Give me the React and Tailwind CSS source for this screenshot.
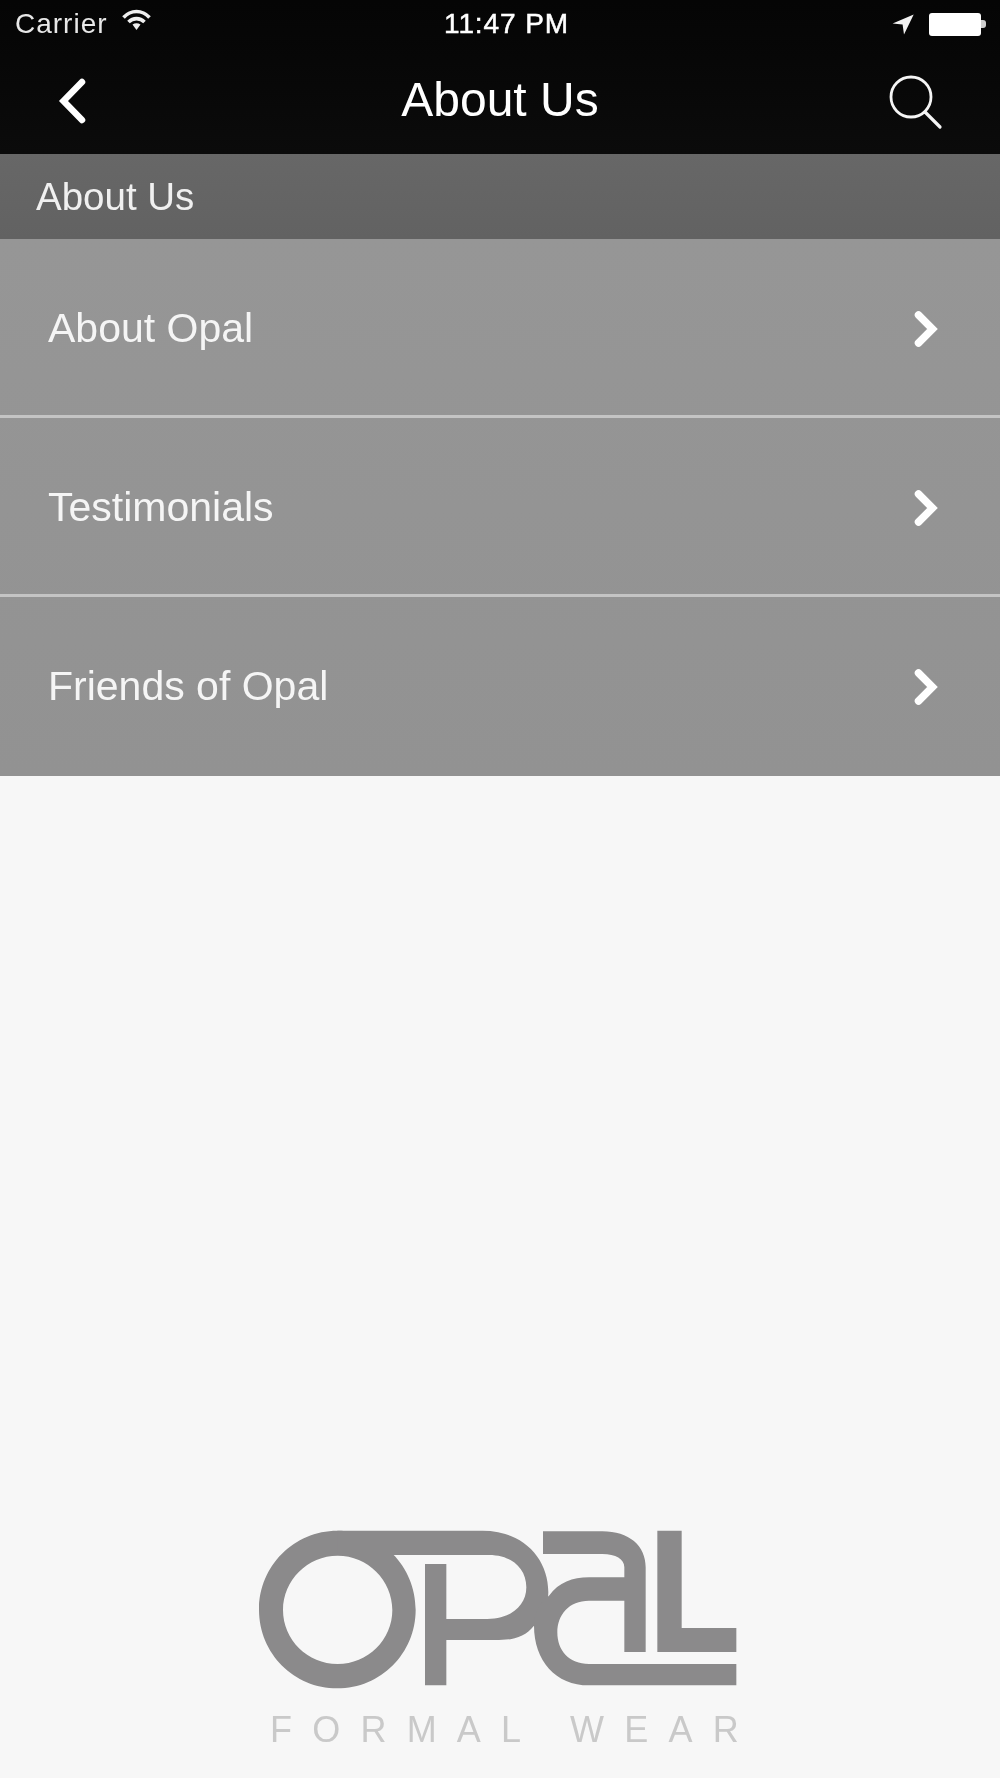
import React from 'react';

const font = { fontFamily: '"Liberation Sans", Arial, sans-serif' };

const ChevronRight = () => (
  <svg width="26" height="40" viewBox="0 0 26 40" fill="none" className="mt-[1px]">
    <path d="M5.5 6 L19.5 20 L5.5 34" stroke="#fff" strokeWidth="7.5" strokeLinecap="round" strokeLinejoin="miter" />
  </svg>
);

const Row = ({ label, last }) => (
  <div className={`flex items-center justify-between pl-[48px] pr-[61px] ${last ? 'h-[179px]' : 'h-[176px] pt-[2px]'}`}>
    <span className="text-[41px] leading-none text-[#f5f5f5]">{label}</span>
    <ChevronRight />
  </div>
);

const OpalLogo = () => (
  <svg width="484" height="160" viewBox="60 58 1452 480" className="block" fill="#8b8a8b">
    {/* O */}
    <path fillRule="evenodd" d="M295 60 C425 60 530 166 530 297 C530 428 425 533 295 533 C165 533 60 428 60 297 C60 166 165 60 295 60 Z M296 135 C206 135 132 208 132 298 C132 388 206 460 296 460 C386 460 460 388 460 298 C460 208 386 135 296 135 Z" />
    {/* P */}
    <path d="M295 60 H730 C850 60 928 140 928 245 C928 290 910 320 885 345 C860 375 830 388 780 388 H622 V524 H558 V160 H622 V325 H745 C815 325 862 285 862 230 C862 170 815 133 750 133 H295 Z" />
    {/* a */}
    <path d="M912 62 H1090 C1170 62 1220 105 1220 170 V424 H1156 V270 H1050 C990 270 955 312 955 365 C955 420 990 460 1050 460 H1492 V524 H1050 C950 524 885 450 885 345 C885 300 905 275 930 255 C960 215 1000 200 1050 200 H1156 V170 C1156 145 1130 130 1090 130 H912 Z" />
    {/* L */}
    <path d="M1255 60 H1328 V352 H1492 V424 H1255 Z" />
  </svg>
);

export default function App() {
  return (
    <div className="flex h-[1778px] w-[1000px] flex-col bg-[#f7f7f7] blur-[0.4px]" style={font}>
      {/* Status bar + nav */}
      <div className="h-[154px] bg-gradient-to-b from-[#050505] to-[#0b0b0b] text-white">
        <div className="grid h-[48px] grid-cols-3 items-center pl-[15px] pr-[14px]">
          <div className="flex items-center gap-[14px]">
            <span className="text-[28px] leading-none tracking-[1px] text-[#e8e8e8]">Carrier</span>
            <svg width="29" height="22" viewBox="0 0 29 22" className="-mt-[8px]" fill="none" stroke="#eee">
              <path d="M1.5 8.5 C9 0.5 20 0.5 27.5 8.5" strokeWidth="3.6" />
              <path d="M6.5 13 C11 8.5 18 8.5 22.5 13" strokeWidth="3.6" />
              <path d="M10.5 15.5 L14.5 21 L18.5 15.5 C16 13.8 13 13.8 10.5 15.5 Z" fill="#eee" stroke="none" />
            </svg>
          </div>
          <div className="ml-[12px] text-center text-[28px] leading-none tracking-[0.9px] whitespace-nowrap [-webkit-text-stroke:0.5px_#fff]">11:47 PM</div>
          <div className="flex items-center justify-end gap-[15px]">
            <svg width="22" height="21" viewBox="0 0 22 21" fill="#f2f2f2">
              <path d="M21.7 0.5 L0.6 9.5 L10.6 10.5 L12 20.5 Z" />
            </svg>
            <div className="flex items-center">
              <div className="h-[23px] w-[52px] rounded-[3px] bg-white" />
              <div className="h-[8px] w-[5px] rounded-r-[3px] bg-[#cfcfcf]" />
            </div>
          </div>
        </div>
        <div className="grid h-[106px] grid-cols-3 items-center pb-[2px]">
          <svg width="30" height="50" viewBox="0 0 30 50" className="ml-[56px] mt-[1px]" fill="none">
            <path d="M26 6 L7.5 25 L26 44" stroke="#fff" strokeWidth="6.5" strokeLinecap="round" />
          </svg>
          <div className="text-center text-[48px] leading-none whitespace-nowrap">About Us</div>
          <svg width="56" height="56" viewBox="0 0 56 56" className="ml-auto mr-[57px] mt-[3px]" fill="none" stroke="#f5f5f5" strokeWidth="2.8">
            <circle cx="24" cy="23" r="20" />
            <path d="M38 38 L53 53" strokeLinecap="round" strokeWidth="3.2" />
          </svg>
        </div>
      </div>

      {/* Section title */}
      <div className="flex h-[85px] items-center bg-gradient-to-b from-[#676767] to-[#626262] pl-[36px] pt-[2px] text-[38.5px] leading-none text-[#f0f0f0]">
        About Us
      </div>

      {/* Menu */}
      <div className="bg-gradient-to-b from-[#969696] to-[#929292]">
        <Row label="About Opal" />
        <div className="h-[3px] bg-[#c4c4c4]" />
        <Row label="Testimonials" />
        <div className="h-[3px] bg-[#c4c4c4]" />
        <Row label="Friends of Opal" last />
      </div>

      {/* Logo */}
      <div className="flex flex-1 flex-col items-center justify-end pb-[33px] pl-[1px]">
        <OpalLogo />
        <div className="mt-[25px] whitespace-nowrap pl-[28px] text-[36px] leading-[30px] tracking-[20.2px] text-[#c9c9c9]">
          FORMAL WEAR
        </div>
      </div>
    </div>
  );
}
